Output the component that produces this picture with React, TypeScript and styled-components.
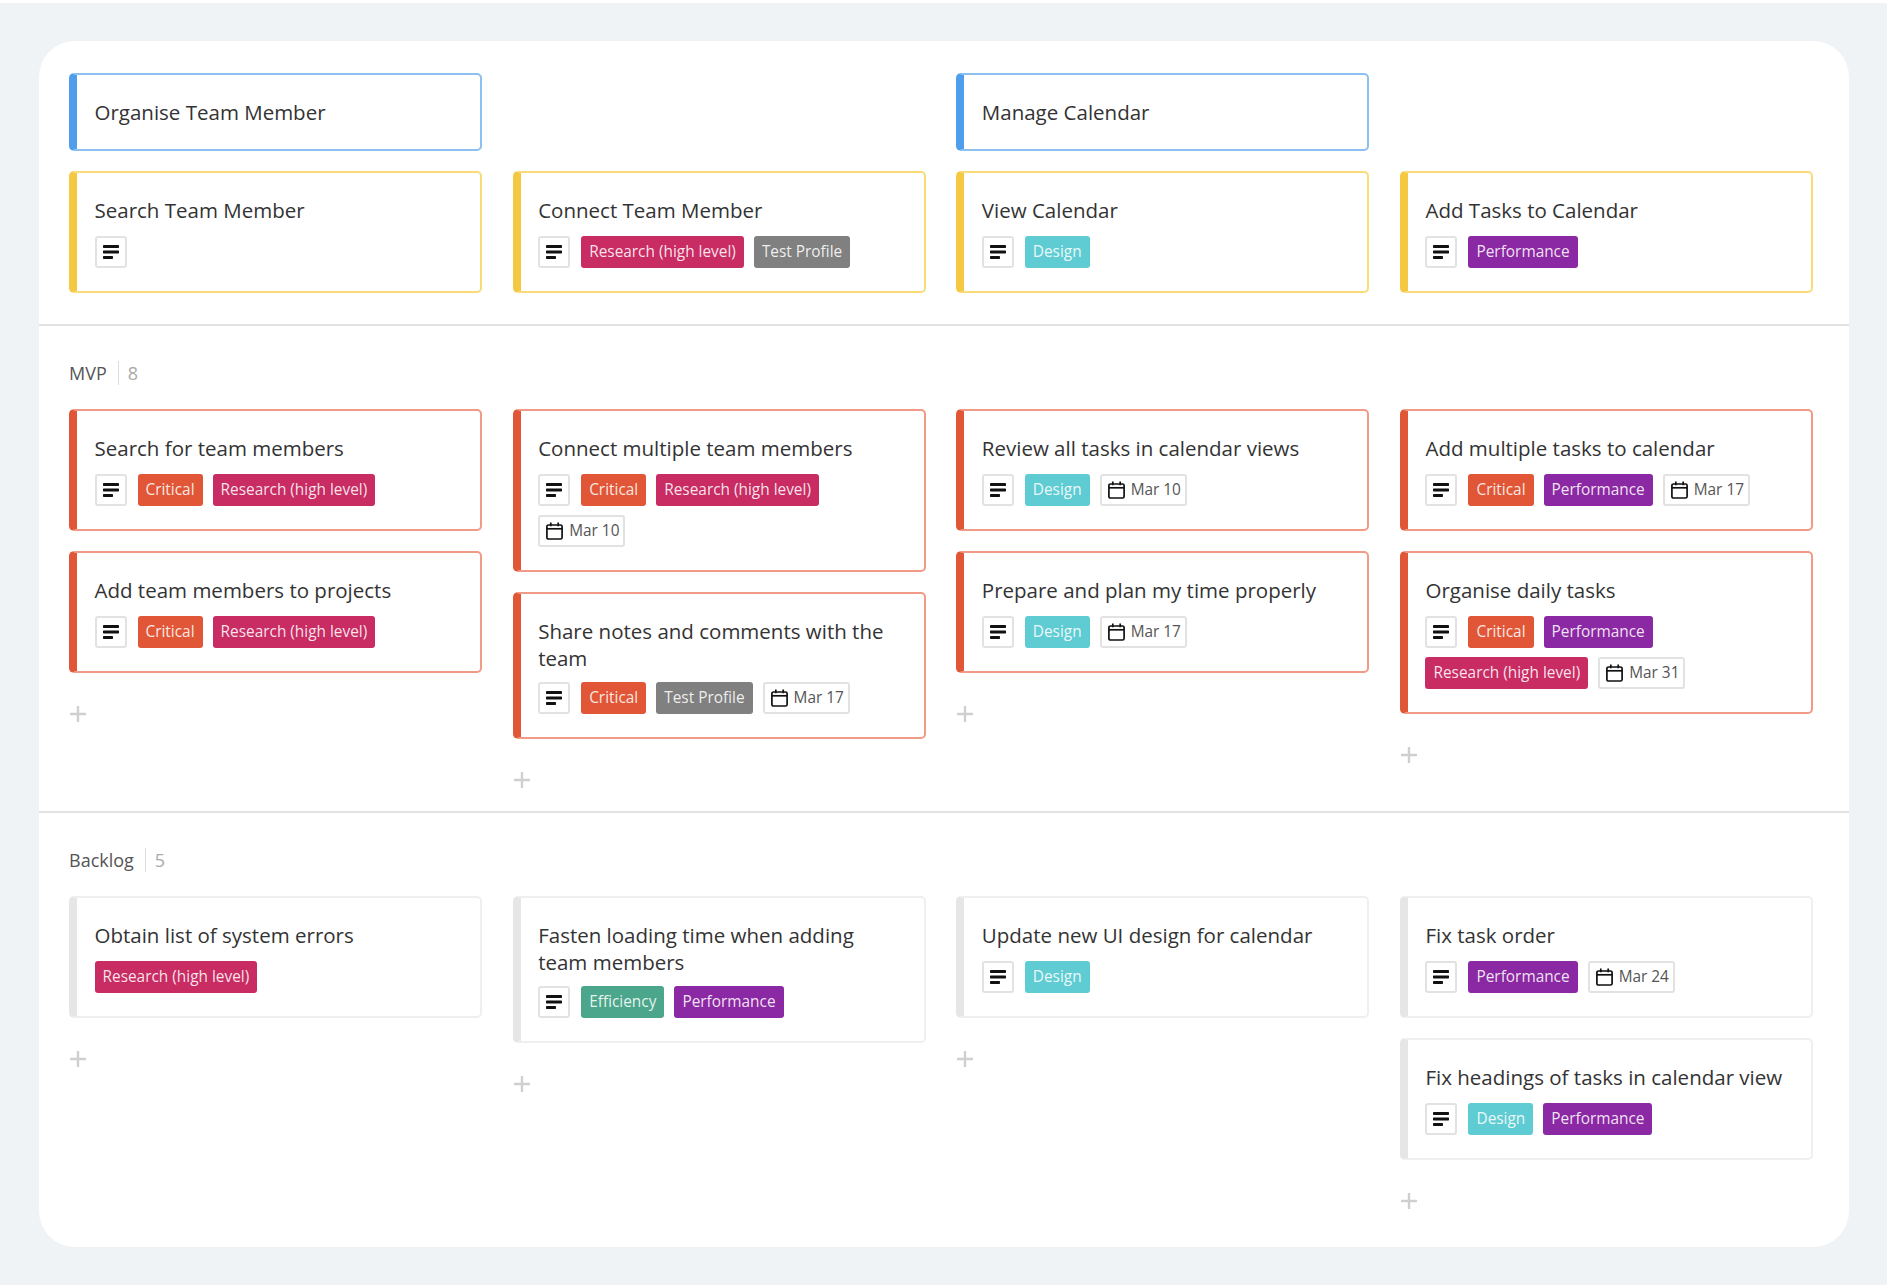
import styled, {createGlobalStyle} from "styled-components"

type TagKind = "critical" | "research" | "test" | "design" | "performance" | "efficiency"
type Tone = "blue" | "yellow" | "red" | "grey"

type CardData = {
    title: string
    notes?: boolean
    tags?: TagKind[]
    date?: string
}

const tagLabels: Record<TagKind, string> = {
    critical: "Critical",
    research: "Research (high level)",
    test: "Test Profile",
    design: "Design",
    performance: "Performance",
    efficiency: "Efficiency",
}

const tagColors: Record<TagKind, string> = {
    critical: "#e15636",
    research: "#c92b63",
    test: "#808080",
    design: "#5fccd3",
    performance: "#8b28a3",
    efficiency: "#4ba68b",
}

const tones: Record<Tone, {bar: string, line: string}> = {
    blue: {bar: "#4f9eec", line: "#8cc0f3"},
    yellow: {bar: "#f5c842", line: "#fadb78"},
    red: {bar: "#e15636", line: "#f19a86"},
    grey: {bar: "#e6e6e6", line: "#efefef"},
}

const mvpColumns: CardData[][] = [
    [
        {title: "Search for team members", notes: true, tags: ["critical", "research"]},
        {title: "Add team members to projects", notes: true, tags: ["critical", "research"]},
    ],
    [
        {title: "Connect multiple team members", notes: true, tags: ["critical", "research"], date: "Mar 10"},
        {title: "Share notes and comments with the team", notes: true, tags: ["critical", "test"], date: "Mar 17"},
    ],
    [
        {title: "Review all tasks in calendar views", notes: true, tags: ["design"], date: "Mar 10"},
        {title: "Prepare and plan my time properly", notes: true, tags: ["design"], date: "Mar 17"},
    ],
    [
        {title: "Add multiple tasks to calendar", notes: true, tags: ["critical", "performance"], date: "Mar 17"},
        {title: "Organise daily tasks", notes: true, tags: ["critical", "performance", "research"], date: "Mar 31"},
    ],
]

const backlogColumns: CardData[][] = [
    [{title: "Obtain list of system errors", tags: ["research"]}],
    [{title: "Fasten loading time when adding team members", notes: true, tags: ["efficiency", "performance"]}],
    [{title: "Update new UI design for calendar", notes: true, tags: ["design"]}],
    [
        {title: "Fix task order", notes: true, tags: ["performance"], date: "Mar 24"},
        {title: "Fix headings of tasks in calendar view", notes: true, tags: ["design", "performance"]},
    ],
]

const NotesIcon = () => (
    <svg width="16" height="14" viewBox="0 0 16 14" fill="#111">
        <rect x="0" y="0" width="16" height="3" rx="0.7" />
        <rect x="0" y="5.4" width="16" height="3" rx="0.7" />
        <rect x="0" y="11" width="10" height="3" rx="0.7" />
    </svg>
)

const CalendarIcon = () => (
    <svg width="17" height="18" viewBox="0 0 17 18" fill="none" stroke="#111" strokeWidth="1.7">
        <rect x="0.9" y="3" width="15.2" height="14" rx="1.6" />
        <path d="M0.9 6.8h15.2" />
        <path d="M4.8 0.6v3.6M12.2 0.6v3.6" />
    </svg>
)

const PlusIcon = () => (
    <svg width="16" height="16" viewBox="0 0 16 16" fill="#cfcfcf">
        <rect x="6.8" y="0" width="2.4" height="16" rx="0.5" />
        <rect x="0" y="6.8" width="16" height="2.4" rx="0.5" />
    </svg>
)

const Card = ({data, tone}: {data: CardData, tone: Tone}) => (
    <CardBox $tone={tone}>
        <CardTitle>{data.title}</CardTitle>
        <CardMeta>
            {data.notes && <NotesBox><NotesIcon /></NotesBox>}
            {data.tags?.map((tag) => <Tag key={tag} $kind={tag}>{tagLabels[tag]}</Tag>)}
            {data.date && <DateChip><CalendarIcon />{data.date}</DateChip>}
        </CardMeta>
    </CardBox>
)

const Release = ({name, count, columns}: {name: string, count: number, columns: CardData[][]}) => (
    <Section>
        <SectionHeader>
            <SectionName>{name}</SectionName>
            <SectionCount>{count}</SectionCount>
        </SectionHeader>
        <Columns>
            {columns.map((cards, i) => (
                <Column key={i}>
                    {cards.map((card) => (
                        <Card key={card.title} data={card} tone={name === "MVP" ? "red" : "grey"} />
                    ))}
                    <AddButton><PlusIcon /></AddButton>
                </Column>
            ))}
        </Columns>
    </Section>
)

export default function App() {
    return (
        <>
            <GlobalStyle />
            <Page>
                <Panel>
                    <MapSection>
                        <Columns>
                            <GoalCard $tone="blue"><CardTitle>Organise Team Member</CardTitle></GoalCard>
                            <div />
                            <GoalCard $tone="blue"><CardTitle>Manage Calendar</CardTitle></GoalCard>
                            <div />
                            <Card tone="yellow" data={{title: "Search Team Member", notes: true}} />
                            <Card tone="yellow" data={{title: "Connect Team Member", notes: true, tags: ["research", "test"]}} />
                            <Card tone="yellow" data={{title: "View Calendar", notes: true, tags: ["design"]}} />
                            <Card tone="yellow" data={{title: "Add Tasks to Calendar", notes: true, tags: ["performance"]}} />
                        </Columns>
                    </MapSection>
                    <Release name="MVP" count={8} columns={mvpColumns} />
                    <Release name="Backlog" count={5} columns={backlogColumns} />
                </Panel>
            </Page>
        </>
    )
}

const GlobalStyle = createGlobalStyle`
    html, body {
        margin: 0;
        background: #fff;
    }

    * {
        box-sizing: border-box;
    }
`

const Page = styled.div`
    margin: 3px 3px 1px 0;
    padding: 38px 38px 38px 39px;

    font-family: "Open Sans", sans-serif;

    background: #f0f3f6;
`

const Panel = styled.div`
    padding-bottom: 15px;

    border-radius: 36px;
    background: #fff;
`

const MapSection = styled.section`
    padding: 32px 30px 31px;

    border-bottom: 2px solid #e2e2e2;
`

const Section = styled.section`
    padding: 0 30px 23px;

    &:not(:last-child) {
        border-bottom: 2px solid #e2e2e2;
    }
`

const SectionHeader = styled.div`
    padding: 35px 0 24px;

    display: flex;
    align-items: center;
    height: 83px;

    font-size: 18px;
    line-height: 24px;
`

const SectionName = styled.span`
    padding-right: 11px;

    color: #555;

    border-right: 1px solid #ddd;
`

const SectionCount = styled.span`
    padding-left: 9px;

    color: #aaa;
`

const Columns = styled.div`
    display: grid;
    grid-template-columns: repeat(4, 413px);
    column-gap: 30.66px;
    row-gap: 20px;
    align-items: start;
`

const Column = styled.div`
    display: flex;
    flex-direction: column;
    align-items: stretch;
    gap: 20px;
`

const CardBox = styled.div<{$tone: Tone}>`
    padding: 24px 18px 23.5px 17.5px;

    border: 2px solid ${(p) => tones[p.$tone].line};
    border-left: 8px solid ${(p) => tones[p.$tone].bar};
    border-radius: 5px;
    background: #fff;
`

const GoalCard = styled(CardBox)`
    height: 78px;
`

const CardTitle = styled.div`
    margin-bottom: 10.5px;
    min-height: 28px;

    color: #333;
    font-size: 20.5px;
    line-height: 26.5px;
`

const CardMeta = styled.div`
    display: flex;
    flex-wrap: wrap;
    gap: 9px 10px;
`

const NotesBox = styled.div`
    margin-right: 1px;
    width: 32px;
    height: 32px;

    display: flex;
    align-items: center;
    justify-content: center;

    border: 2px solid #e2e2e2;
    border-radius: 3px;
`

const Tag = styled.span<{$kind: TagKind}>`
    padding: 0 8px;
    height: 32px;

    color: rgba(255, 255, 255, 0.88);
    font-size: 15.4px;
    line-height: 32px;

    border-radius: 3px;
    background: ${(p) => tagColors[p.$kind]};
`

const DateChip = styled.span`
    padding: 0 4px 0 6px;
    height: 32px;

    display: flex;
    align-items: center;
    gap: 6px;

    color: #555;
    font-size: 15.4px;

    border: 2px solid #e2e2e2;
    border-radius: 3px;
`

const AddButton = styled.div`
    margin: 13px 0 0 1px;
    height: 16px;

    display: flex;
`
